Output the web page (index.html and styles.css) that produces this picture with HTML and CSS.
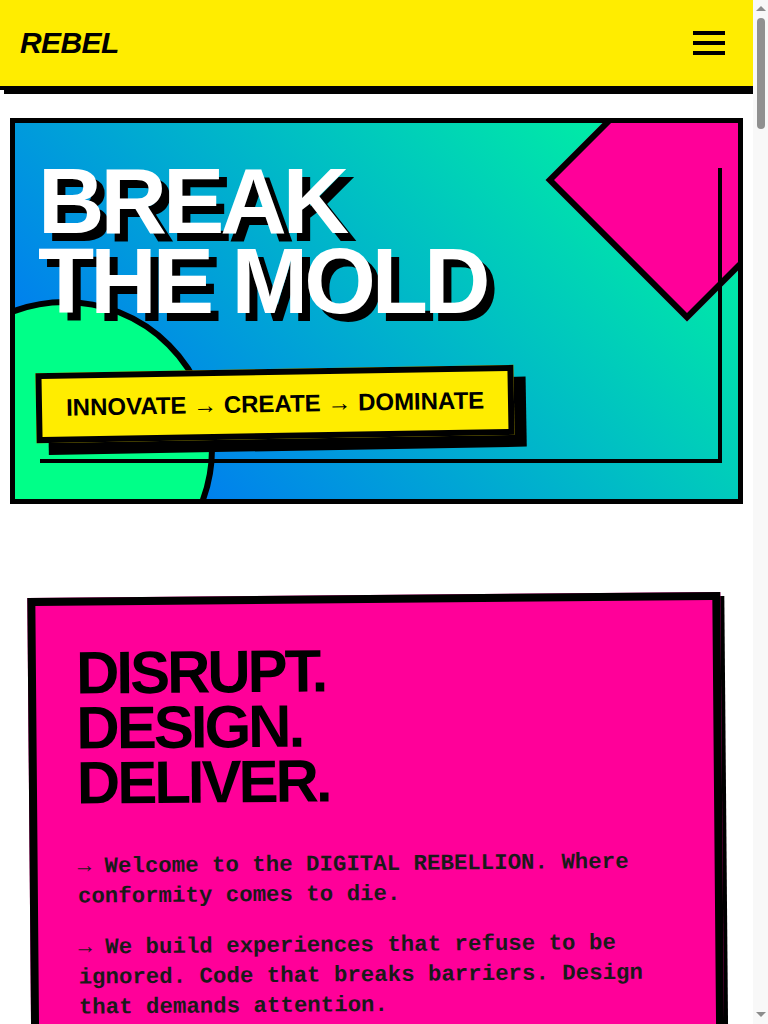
FILE: index.html
```html
<!DOCTYPE html>
<html lang="en">
<head>
<meta charset="utf-8">
<meta name="viewport" content="width=device-width, initial-scale=1">
<title>REBEL</title>
<link rel="stylesheet" href="styles.css">
</head>
<body>
<header class="site-header">
  <a class="logo" href="#">REBEL</a>
  <button class="menu-btn" type="button" aria-label="Open menu">
    <span class="bar"></span>
    <span class="bar"></span>
    <span class="bar"></span>
  </button>
</header>
<main class="page">
  <section class="hero">
    <div class="hero-circle"></div>
    <div class="hero-diamond"></div>
    <div class="hero-frame"></div>
    <h1 class="hero-title">BREAK<br>THE MOLD</h1>
    <div class="hero-tag">INNOVATE → CREATE → DOMINATE</div>
  </section>

  <section class="intro">
    <div class="intro-card">
      <h2 class="intro-title">DISRUPT.<br>DESIGN.<br>DELIVER.</h2>
      <p class="intro-text">→ Welcome to the DIGITAL REBELLION. Where conformity comes to die.</p>
      <p class="intro-text">→ We build experiences that refuse to be ignored. Code that breaks barriers. Design that demands attention.</p>
      <p class="intro-text">→ No templates. No rules. No compromise.</p>
      <a class="intro-cta" href="#">JOIN THE REVOLUTION</a>
    </div>
  </section>

  <section class="more">
    <h2 class="more-title">WHAT WE DO</h2>
    <div class="more-grid">
      <div class="more-item">BRANDING</div>
      <div class="more-item">WEB DESIGN</div>
      <div class="more-item">DEVELOPMENT</div>
      <div class="more-item">STRATEGY</div>
    </div>
  </section>
</main>
<footer class="site-footer">© REBEL STUDIO</footer>

<div class="scroll-rail" aria-hidden="true">
  <span class="rail-up"></span>
  <span class="rail-thumb"></span>
  <span class="rail-down"></span>
</div>
</body>
</html>
```

FILE: styles.css
```css
* {
  box-sizing: border-box;
}

html,
body {
  margin: 0;
  padding: 0;
}

body {
  margin-right: 15px;
  font-family: "Liberation Sans", Arial, sans-serif;
  background: #ffffff;
  color: #000000;
  overflow-x: hidden;
}

/* Scroll rail on the right edge */
.scroll-rail {
  position: fixed;
  top: 0;
  right: 0;
  z-index: 50;
  display: flex;
  flex-direction: column;
  align-items: center;
  width: 15px;
  height: 100vh;
  background: #f8f8f8;
}

.rail-up {
  width: 0;
  height: 0;
  margin-top: 6px;
  border-left: 5px solid transparent;
  border-right: 5px solid transparent;
  border-bottom: 5px solid #8c8c8c;
}

.rail-thumb {
  width: 8px;
  height: 111px;
  margin-top: 7px;
  border-radius: 4px;
  background: #909090;
}

.rail-down {
  width: 0;
  height: 0;
  margin-top: auto;
  margin-bottom: 7px;
  border-left: 5px solid transparent;
  border-right: 5px solid transparent;
  border-top: 5px solid #8c8c8c;
}

/* Header */
.site-header {
  display: flex;
  align-items: center;
  justify-content: space-between;
  height: 90px;
  padding: 0 20px;
  background: #ffed00;
  border-bottom: 4px solid #000;
  box-shadow: 4px 4px 0 #000;
}

.logo {
  font-size: 30px;
  font-weight: 700;
  font-style: italic;
  letter-spacing: -0.6px;
  color: #000;
  text-decoration: none;
}

.menu-btn {
  display: flex;
  flex-direction: column;
  gap: 6px;
  padding: 8px;
  background: none;
  border: 0;
  cursor: pointer;
}

.bar {
  display: block;
  width: 32px;
  height: 4px;
  background: #000;
}

/* Hero */
.hero {
  position: relative;
  overflow: hidden;
  margin: 28px 10px 0;
  padding: 38px 23px 60px;
  border: 5px solid #000;
  background: linear-gradient(45deg, #0066ff 0%, #00ff99 100%);
}

.hero-circle {
  position: absolute;
  left: -100px;
  bottom: -100px;
  width: 300px;
  height: 300px;
  border-radius: 50%;
  background: #00ff88;
  border: 6px solid #000;
}

.hero-diamond {
  position: absolute;
  top: -43px;
  right: -49px;
  width: 200px;
  height: 200px;
  background: #ff0099;
  border: 6px solid #000;
  transform: rotate(45deg);
}

.hero-frame {
  position: absolute;
  top: 45px;
  left: 25px;
  right: 16px;
  bottom: 36px;
  border-right: 4px solid #000;
  border-bottom: 4px solid #000;
  z-index: 1;
}

.hero-title {
  position: relative;
  z-index: 2;
  margin: 0;
  font-size: 92px;
  font-weight: 700;
  line-height: 80px;
  letter-spacing: -4px;
  color: #fff;
  text-shadow: 8px 8px 0 #000;
}

.hero-tag {
  position: relative;
  z-index: 2;
  width: max-content;
  margin-top: 48px;
  margin-left: -2px;
  padding: 15px 24px;
  background: #ffed00;
  border: 6px solid #000;
  box-shadow: 12px 12px 0 #000;
  font-size: 24px;
  font-weight: 700;
  color: #000;
  transform: rotate(-1deg);
}

/* Intro card */
.intro {
  padding: 91px 30px 0;
}

.intro-card {
  padding: 40px;
  background: #ff0099;
  border: 8px solid #000;
  box-shadow: 4px 4px 0 #000;
  transform: rotate(-0.5deg);
}

.intro-title {
  margin: 0 0 40px;
  font-size: 60px;
  font-weight: 700;
  line-height: 0.92;
  letter-spacing: -3px;
  color: #000;
}

.intro-text {
  margin: 0 0 21px;
  font-family: "Liberation Mono", "Courier New", monospace;
  font-size: 22.4px;
  font-weight: 700;
  line-height: 30px;
  color: #1a1a1a;
}

.intro-cta {
  display: inline-block;
  margin-top: 20px;
  padding: 16px 28px;
  background: #000;
  color: #ffed00;
  font-size: 22px;
  font-weight: 700;
  text-decoration: none;
}

/* Below the fold */
.more {
  padding: 100px 30px;
}

.more-title {
  margin: 0 0 40px;
  font-size: 60px;
  letter-spacing: -3px;
}

.more-grid {
  display: grid;
  grid-template-columns: 1fr 1fr;
  gap: 24px;
}

.more-item {
  padding: 60px 24px;
  border: 6px solid #000;
  background: #00ff88;
  font-size: 28px;
  font-weight: 700;
}

.site-footer {
  padding: 40px 20px;
  background: #000;
  color: #ffed00;
  font-weight: 700;
}
```
